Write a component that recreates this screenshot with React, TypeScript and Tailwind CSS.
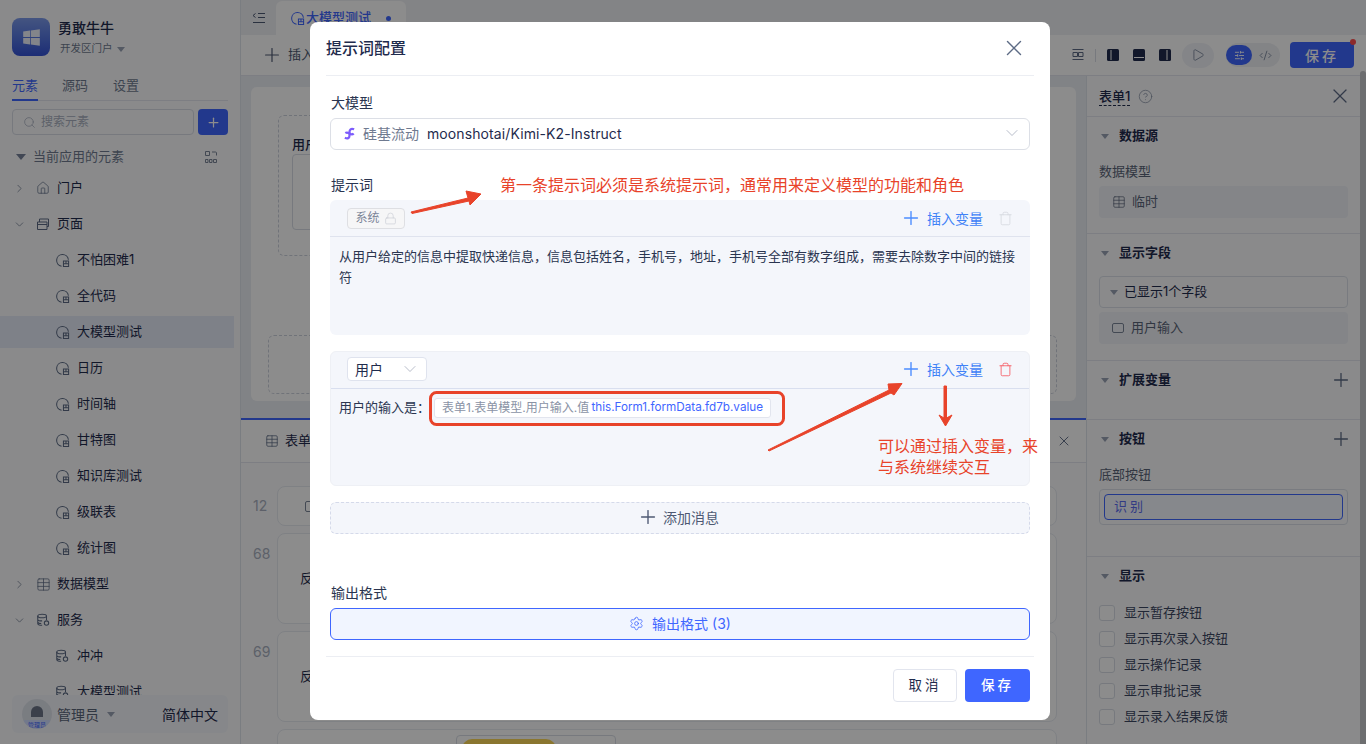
import { ChevronDown, ChevronRight, CircleHelp, CodeXml, Home, Lock, Play, Plus, Search, Settings, SlidersHorizontal, Table, Trash, X } from "lucide-react";
import { FaWindows } from "react-icons/fa";

const fontStack = { fontFamily: 'Inter, "Noto Sans CJK SC", sans-serif' };

function PageIcon({ className = "text-[#5d6b85]" }: { className?: string }) {
  return (
    <svg viewBox="0 0 16 16" fill="none" stroke="currentColor" strokeWidth="1.1" className={`h-[15px] w-[15px] shrink-0 ${className}`}>
      <path d="M7 14.2A6.3 6.3 0 1 1 14.3 7.2" />
      <path d="M9 8.5h5.5v6H9zM9 11.5h5.5M11.7 8.5v3" />
    </svg>
  );
}

function ServiceIcon() {
  return (
    <svg viewBox="0 0 16 16" fill="none" stroke="currentColor" strokeWidth="1.2" className="h-[14px] w-[14px] shrink-0 text-[#5d6b85]">
      <ellipse cx="7" cy="3.5" rx="5" ry="2" />
      <path d="M2 3.5v8.5c0 1 2 2 5 2M12 3.500V8M2 7c0 1 2 2 5 2M2 10c0 1 2 2 4 2" />
      <circle cx="12" cy="11.5" r="2.5" />
    </svg>
  );
}

function Caret({ className = "" }: { className?: string }) {
  return <span className={`inline-block h-0 w-0 border-x-[4px] border-t-[5px] border-x-transparent border-t-[#9aa3b5] ${className}`} />;
}

function TreeRow({ label, level = 1, open, active, icon }: { label: string; level?: number; open?: boolean; active?: boolean; icon: React.ReactNode }) {
  return (
    <div className={`flex w-[234px] items-center text-[13px] text-[#1f2b4d] ${active ? "my-[2px] h-[32px] bg-[#e6ebf7]" : "h-[36px]"}`}>
      {level === 1 ? (
        <>
          <span className="flex w-[38px] pl-[13px] text-[#7b8598]">
            {open ? <ChevronDown size={13} strokeWidth={1.5} /> : <ChevronRight size={13} strokeWidth={1.5} />}
          </span>
          <span className="-ml-[2px] flex w-[21px] items-center">{icon}</span>
        </>
      ) : (
        <span className="ml-[55px] flex w-[22px] items-center">{icon}</span>
      )}
      <span>{label}</span>
    </div>
  );
}

function Sidebar() {
  const pages = ["不怕困难1", "全代码", "大模型测试", "日历", "时间轴", "甘特图", "知识库测试", "级联表", "统计图"];
  return (
    <aside className="relative h-full w-[241px] shrink-0 overflow-hidden border-r border-[#dfe3ec] bg-[#fbfcfe] pt-[18px]">
      <div className="flex items-center px-[12px]">
        <div className="flex h-[38px] w-[38px] items-center justify-center rounded-[8px] bg-gradient-to-b from-[#7d9aeb] to-[#3552d6]">
          <FaWindows size={19} className="text-white/90" />
        </div>
        <div className="ml-[8px]">
          <div className="text-[14px] font-medium leading-[20px] text-[#1f2b4d]">勇敢牛牛</div>
          <div className="ml-[2px] mt-[4px] flex items-center gap-[4px] text-[10.5px] leading-[14px] text-[#6f7a90]">
            开发区门户 <Caret />
          </div>
        </div>
      </div>
      <div className="mx-[12px] mt-[20px] flex h-[25px] gap-[24px] border-b border-[#e3e6ee] text-[13px]">
        <span className="h-[25px] border-b-2 border-[#3f66ff] text-[#3f66ff]">元素</span>
        <span className="text-[#6f7a90]">源码</span>
        <span className="ml-[1px] text-[#6f7a90]">设置</span>
      </div>
      <div className="mx-[12px] mt-[8px] flex gap-[4px]">
        <div className="flex h-[26px] w-[182px] items-center gap-[5px] rounded-[4px] border border-[#d9dde6] pl-[10px] text-[12px] text-[#a9b0bf]">
          <Search size={13} strokeWidth={1.4} /> 搜索元素
        </div>
        <div className="flex h-[26px] w-[30px] items-center justify-center rounded-[4px] bg-[#3f66ff] text-white">
          <Plus size={15} />
        </div>
      </div>
      <div className="mt-[9px] flex h-[26px] w-[234px] items-center pl-[16px] pr-[16px] text-[13px] text-[#6f7a90]">
        <Caret className="mr-[7px] !border-x-[5px] !border-t-[6px] !border-t-[#77829a]" />
        当前应用的元素
        <svg viewBox="0 0 14 14" fill="none" stroke="#7b8598" className="ml-auto h-[14px] w-[14px]">
          <path d="M1.500 1.500h4v4h-4zM8 2h3.500a1 1 0 0 1 1 1v2.500M1.500 9.500h2.500v3h-2.500zM5.500 9.500h2.500v3h-2.500zM9.500 9.500h3v3h-3z" />
        </svg>
      </div>
      <TreeRow label="门户" icon={<Home size={14} strokeWidth={1.2} className="text-[#5d6b85]" />} />
      <TreeRow label="页面" open icon={<svg viewBox="0 0 14 14" fill="none" stroke="#5d6b85" className="h-[14px] w-[14px]"><path d="M1.500 5h9.500v7.500h-9.500zM1.500 7.500h9.500M3.500 5V2h9v7.500h-1.500" /></svg>} />
      {pages.map((p) => (
        <TreeRow key={p} label={p} level={2} active={p === "大模型测试"} icon={<PageIcon />} />
      ))}
      <TreeRow label="数据模型" icon={<Table size={15} strokeWidth={1.2} className="text-[#5d6b85]" />} />
      <TreeRow label="服务" open icon={<ServiceIcon />} />
      <TreeRow label="冲冲" level={2} icon={<ServiceIcon />} />
      <TreeRow label="大模型测试" level={2} icon={<ServiceIcon />} />
      <div className="absolute bottom-[11px] left-[12px] flex h-[38px] w-[216px] items-center rounded-[6px] bg-[#f4f6fb] pl-[10px] pr-[10px]">
        <div className="relative flex h-[30px] w-[30px] items-start justify-center overflow-hidden rounded-full bg-[#dfe3ec] pt-[7px]">
          <div className="h-[11px] w-[12px] rounded-t-full bg-[#6c7688]" />
          <span className="absolute bottom-0 left-0 w-full rounded-[4px] bg-[#cfdcff] text-center text-[6px] leading-[9px] text-[#3f66ff]">管理员</span>
        </div>
        <span className="ml-[5px] text-[14px] text-[#5a6478]">管理员</span>
        <Caret className="ml-[8px]" />
        <span className="ml-auto text-[14px] text-[#1f2b4d]">简体中文</span>
      </div>
    </aside>
  );
}

function CenterArea() {
  return (
    <div className="flex h-full w-[845px] shrink-0 flex-col">
      <div className="h-[342px] bg-[#eceff5] px-[10px] pt-[11px]">
        <div className="relative h-[314px] rounded-[6px] bg-white pl-[27px] pt-[28px]">
          <div className="h-[141px] w-[400px] rounded-[6px] border border-dashed border-[#cdd2dd] pl-[13px] pt-[18px]">
            <div className="text-[13px] font-medium leading-[20px] text-[#1f2b4d]">用户</div>
            <div className="h-[76px] w-[300px] rounded-[4px] border border-[#d9dde6]" />
          </div>
          <div className="absolute left-[17px] top-[248px] h-[59px] w-[789px] rounded-[6px] border border-dashed border-[#cdd2dd]" />
        </div>
      </div>
      <div className="flex h-[45px] items-center border-t-2 border-b border-t-[#3f66ff] border-b-[#e3e6ee] bg-white pl-[24px] pr-[14px] text-[13px] text-[#1f2b4d]">
        <Table size={14} strokeWidth={1.3} className="mr-[6px] text-[#5d6b85]" /> 表单
        <X size={16} strokeWidth={1.4} className="ml-auto text-[#5d6b85]" />
      </div>
      <div className="flex flex-1 flex-col gap-[7px] overflow-hidden bg-[#fbfcfe] pl-[12px] pt-[23px]">
        <div className="flex">
          <span className="w-[24px] pt-[9px] text-[14px] text-[#a9b0bf]">12</span>
          <div className="flex h-[40px] w-[780px] items-center rounded-[8px] border border-[#e8ebf1] bg-white pl-[27px]">
            <span className="h-[11px] w-[11px] rounded-[2px] border border-[#7b8598]" />
          </div>
        </div>
        {["68", "69"].map((no) => (
          <div key={no} className="flex">
            <span className="w-[24px] pt-[10px] text-[14px] text-[#a9b0bf]">{no}</span>
            <div className="flex h-[91px] w-[780px] items-center rounded-[8px] border border-[#e8ebf1] bg-white pl-[22px] text-[13px] text-[#1f2b4d]">反</div>
          </div>
        ))}
        <div className="ml-[24px] h-[60px] w-[780px] rounded-[8px] border border-[#e8ebf1] bg-white pl-[178px] pt-[5px]">
          <div className="h-[40px] w-[160px] rounded-[4px] border border-[#d9dde6] pl-[5px] pt-[3px]">
            <div className="h-[20px] w-[94px] rounded-t-[10px] bg-[#fcd757]" />
          </div>
        </div>
      </div>
    </div>
  );
}

function PanelSection({ title, plus, className, children }: { title: string; plus?: boolean; className: string; children?: React.ReactNode }) {
  return (
    <section className={`border-b border-[#e3e6ee] px-[12px] pt-[9px] ${className}`}>
      <div className="flex h-[20px] items-center text-[13px] font-semibold text-[#1f2b4d]">
        <Caret className="ml-[2px] mr-[10px]" />
        {title}
        {plus && <Plus size={22} strokeWidth={1.4} className="-mr-[4px] ml-auto text-[#5d6b85]" />}
      </div>
      {children}
    </section>
  );
}

function RightPanel() {
  const checks = ["显示暂存按钮", "显示再次录入按钮", "显示操作记录", "显示审批记录", "显示录入结果反馈"];
  return (
    <aside className="h-full w-[274px] shrink-0 border-l border-[#dfe3ec] bg-[#fbfcfe] text-[#1f2b4d]">
      <div className="flex h-[41px] items-center border-b border-[#e3e6ee] px-[12px]">
        <span className="border-b border-dashed border-[#1f2b4d] text-[13px] font-medium leading-[18px]">表单1</span>
        <CircleHelp size={15} strokeWidth={1.2} className="ml-[8px] text-[#8a93a5]" />
        <X size={24} strokeWidth={1.2} className="-mr-[4px] ml-auto text-[#5d6b85]" />
      </div>
      <PanelSection title="数据源" className="h-[117px]">
        <div className="mt-[15px] text-[13px] leading-[20px] text-[#5a6478]">数据模型</div>
        <div className="mt-[5px] flex h-[32px] items-center rounded-[4px] bg-[#f1f3f8] pl-[13px] text-[13px] text-[#5a6478]">
          <Table size={14} strokeWidth={1.2} className="mr-[6px]" /> 临时
        </div>
      </PanelSection>
      <PanelSection title="显示字段" className="h-[127px]">
        <div className="mt-[13px] flex h-[32px] items-center rounded-[4px] border border-[#dde1ea] pl-[10px] text-[13px]">
          <Caret className="mr-[6px]" /> 已显示1个字段
        </div>
        <div className="mt-[4px] flex h-[32px] items-center rounded-[4px] bg-[#f1f3f8] pl-[13px] text-[13px] text-[#5a6478]">
          <span className="mr-[7px] h-[10px] w-[12px] rounded-[2px] border border-[#7b8598]" /> 用户输入
        </div>
      </PanelSection>
      <PanelSection title="扩展变量" plus className="h-[59px]" />
      <PanelSection title="按钮" plus className="h-[137px]">
        <div className="mt-[15px] text-[13px] leading-[20px] text-[#5a6478]">底部按钮</div>
        <div className="mt-[5px] rounded-[4px] border border-[#dde1ea] px-[4px] pb-[4px] pt-[4px]">
          <div className="flex h-[26px] items-center rounded-[4px] border border-[#3f66ff] bg-[#f4f7ff] pl-[9px] text-[13px] tracking-[3px] text-[#5b6cf0]">识别</div>
        </div>
      </PanelSection>
      <PanelSection title="显示" className="border-b-0">
        <div className="mt-[14px] flex flex-col">
          {checks.map((c) => (
            <label key={c} className="flex h-[26px] items-center text-[13px] text-[#3d4763]">
              <span className="mr-[9px] h-[16px] w-[16px] rounded-[3px] border border-[#d9dde6] bg-white" />
              {c}
            </label>
          ))}
        </div>
      </PanelSection>
    </aside>
  );
}

function LayoutIcon({ line }: { line: string }) {
  return (
    <svg viewBox="0 0 12 12" className="h-[12px] w-[12px]">
      <rect width="12" height="12" rx="1.500" fill="#1f2b4d" />
      <path d={line} stroke="#fff" fill="none" />
    </svg>
  );
}

function TopBars() {
  return (
    <>
      <div className="flex h-[35px] shrink-0 bg-[#eef0f5]">
        <div className="flex w-[35px] items-center justify-center text-[#4e5a73]">
          <svg viewBox="0 0 14 12" fill="none" stroke="currentColor" className="h-[12px] w-[14px]"><path d="M3.500 1.500 1 3.500l2.500 2M6 1.500h7M6 5.500h7M1 10.500h12" /></svg>
        </div>
        <div className="mt-[1px] flex h-[34px] w-[130px] items-center gap-[1px] rounded-t-[6px] bg-white pl-[14px] text-[13px] font-medium text-[#3f66ff]">
          <PageIcon className="text-[#3f66ff]" /> 大模型测试
          <span className="ml-[14px] h-[5px] w-[5px] rounded-full bg-[#3f66ff]" />
        </div>
      </div>
      <div className="flex h-[41px] shrink-0 items-center border-b border-[#e3e6ee] bg-white pl-[20px] pr-[12px] text-[13px] text-[#4e5a73]">
        <Plus size={22} strokeWidth={1.3} className="mr-[5px]" /> 插入
        <div className="ml-auto flex items-center">
          <svg viewBox="0 0 12 12" fill="none" stroke="#5d6b85" className="h-[12px] w-[12px]"><path d="M.5.5h11M1 3.500h4.500v4H1zM6.500 3.500H11v4H6.500zM.5 10.500h11" /></svg>
          <span className="ml-[11px] h-[13px] w-px bg-[#d9dde6]" />
          <div className="ml-[11px] flex gap-[14px]">
            <LayoutIcon line="M4 1v10" />
            <LayoutIcon line="M1 8.500h10" />
            <LayoutIcon line="M8 1v10" />
          </div>
          <span className="ml-[11px] flex h-[25px] w-[32px] items-center justify-center rounded-full bg-[#f1f3f8]">
            <Play size={14} strokeWidth={1.2} className="text-[#5d6b85]" />
          </span>
          <div className="ml-[12px] flex h-[24px] w-[54px] items-center rounded-full bg-[#eef0f5]">
            <span className="flex h-[20px] w-[26px] items-center justify-center rounded-full bg-[#3f66ff] text-white"><SlidersHorizontal size={11} /></span>
            <CodeXml size={13} strokeWidth={1.3} className="ml-[7px] text-[#5d6b85]" />
          </div>
          <div className="relative ml-[10px] flex h-[26px] w-[64px] items-center justify-center rounded-[4px] bg-[#3f66ff] text-[14px] font-medium tracking-[3px] text-white">
            保存
            <span className="absolute -right-[2px] -top-[3px] h-[6px] w-[6px] rounded-full bg-[#ff4d4f]" />
          </div>
        </div>
      </div>
    </>
  );
}

function FormLabel({ children, className = "" }: { children: React.ReactNode; className?: string }) {
  return <div className={`pl-[1px] text-[14px] leading-[20px] text-[#2a3550] ${className}`}>{children}</div>;
}

function InsertVar({ danger }: { danger?: boolean }) {
  return (
    <div className="ml-auto flex items-center">
      <Plus size={22} strokeWidth={1.5} className="text-[#4b8dff]" />
      <span className="ml-[5px] text-[14px] text-[#3f82f7]">插入变量</span>
      <Trash size={15} strokeWidth={1.3} className={`ml-[15px] ${danger ? "text-[#f5545c]" : "text-[#d5d8df]"}`} />
    </div>
  );
}

function PromptDialog() {
  return (
    <div className="absolute left-[310px] top-[22px] flex h-[698px] w-[740px] flex-col rounded-[8px] bg-white px-[16px]">
      <div className="flex h-[54px] shrink-0 items-center border-b border-[#eceef3] pb-[2px]">
        <span className="text-[16px] font-medium text-[#1f2b4d]">提示词配置</span>
        <X size={26} strokeWidth={1.3} className="ml-auto mr-[7px] text-[#5d6b85]" />
      </div>
      <div className="flex-1 px-[4px] pt-[17px]">
        <FormLabel>大模型</FormLabel>
        <div className="mt-[5px] flex h-[32px] items-center rounded-[6px] border border-[#dcdfe6] pb-[2px] pl-[12px] pr-[7px] text-[14px]">
          <svg viewBox="0 0 14 14" fill="none" stroke="#7c5cfc" strokeWidth="2.4" className="mr-[7px] h-[13px] w-[13px]">
            <path d="M12 2.500C8.500 1 7 3 7 5.500v4C7 12 5 13 2 11.500" />
            <path d="M2.500 6.500c1.500-1 3-.5 4.500.5s3.500 1.200 4.500 0" />
          </svg>
          <span className="text-[#6f7a90]">硅基流动</span>
          <span className="ml-[8px] tracking-[0.1px] text-[#1f2b4d]">moonshotai/Kimi-K2-Instruct</span>
          <ChevronDown size={20} strokeWidth={1} className="ml-auto text-[#a9b0bf]" />
        </div>
        <FormLabel className="mt-[25px]">提示词</FormLabel>
        <div className="mt-[5px] h-[135px] rounded-[6px] bg-[#f4f6fb]">
          <div className="flex h-[37px] items-center border-b border-[#dfe3ee] pl-[17px] pr-[17px]">
            <span className="flex h-[21px] w-[58px] items-center justify-center gap-[4px] rounded-[4px] border border-[#dedfe3] bg-[#f6f6f7] text-[12px] text-[#7b8598]">
              系统 <Lock size={13} strokeWidth={1.2} className="text-[#c9ccd3]" />
            </span>
            <InsertVar />
          </div>
          <p className="px-[9px] pt-[9px] text-[13px] leading-[21px] text-[#2a3550]">从用户给定的信息中提取快递信息，信息包括姓名，手机号，地址，手机号全部有数字组成，需要去除数字中间的链接符</p>
        </div>
        <div className="mt-[16px] h-[135px] rounded-[6px] border border-[#eef0f5] bg-[#f4f6fb]">
          <div className="flex h-[37px] items-center border-b border-[#d9dfef] pb-[2px] pl-[16px] pr-[16px]">
            <span className="flex h-[24px] w-[80px] items-center justify-between rounded-[4px] border border-[#dfe3ee] bg-white pl-[7px] pr-[6px] text-[14px] text-[#1f2b4d]">
              用户 <ChevronDown size={20} strokeWidth={1} className="text-[#a9b0bf]" />
            </span>
            <InsertVar danger />
          </div>
          <div className="flex items-center pl-[8px] pt-[9px]">
            <span className="whitespace-nowrap text-[13px] text-[#2a3550]">用户的输入是：</span>
            <span className="ml-[4px] flex h-[20px] w-[337px] items-center justify-between whitespace-nowrap rounded-[3px] border border-[#e2e5ee] bg-white px-[7px] text-[12px]">
              <span className="text-[#8a93a5]">表单1.表单模型.用户输入.值</span>
              <span className="text-[11.7px] text-[#3f66ff]">this.Form1.formData.fd7b.value</span>
            </span>
          </div>
        </div>
        <div className="mt-[16px] flex h-[32px] items-center justify-center rounded-[6px] border border-dashed border-[#d5daea] bg-[#f4f6fb] pb-[2px] pr-[4px] text-[14px] text-[#4e5a73]">
          <Plus size={22} strokeWidth={1.5} className="mr-[4px]" /> 添加消息
        </div>
        <FormLabel className="mt-[49px]">输出格式</FormLabel>
        <div className="mt-[5px] flex h-[32px] items-center justify-center rounded-[6px] border border-[#3f66ff] bg-[#f1f5ff] pb-[2px] text-[14px] text-[#3f66ff]">
          <Settings size={15} strokeWidth={1.3} className="mr-[8px]" /> 输出格式 (3)
        </div>
      </div>
      <div className="flex h-[64px] shrink-0 items-start justify-end gap-[8px] border-t border-[#eceef3] px-[4px] pt-[12px]">
        <button className="h-[33px] w-[64px] rounded-[4px] border border-[#e2e5ee] bg-white text-[13.5px] tracking-[3px] text-[#1f2b4d]">取消</button>
        <button className="h-[33px] w-[65px] rounded-[4px] bg-[#3f66ff] text-[13.5px] font-medium tracking-[3px] text-white">保存</button>
      </div>
    </div>
  );
}

function Annotations() {
  const red = "#e8432a";
  return (
    <>
      <svg viewBox="0 0 1366 744" fill="none" className="pointer-events-none absolute inset-0 h-[744px] w-[1366px]">
        <rect x="430.500" y="392.500" width="353" height="32" rx="6" stroke={red} strokeWidth="3" />
        <path d="M411 212 468 198 466 191 481 194 470 205 469 201 412 213.500Z" fill={red} stroke={red} />
        <path d="M768 450 889 390 888 384 902 383.500 894 395 891 393 769 451Z" fill={red} stroke={red} />
        <path d="M944 386h2.500v32l5.500-3-6.500 11-6.500-11 5 3Z" fill={red} stroke={red} />
      </svg>
      <div className="absolute left-[500px] top-[174px] text-[16px] leading-[22px] text-[#e8432a]">第一条提示词必须是系统提示词，通常用来定义模型的功能和角色</div>
      <div className="absolute left-[878px] top-[436px] w-[165px] text-[16px] leading-[21px] text-[#e8432a]">可以通过插入变量，来与系统继续交互</div>
    </>
  );
}

export default function App() {
  return (
    <div style={fontStack} className="relative flex h-[744px] w-[1366px] overflow-hidden bg-white">
      <Sidebar />
      <main className="flex h-full min-w-0 flex-1 flex-col">
        <TopBars />
        <div className="flex min-h-0 flex-1">
          <CenterArea />
          <RightPanel />
          <div className="-mt-[5px] w-[6px] shrink-0 rounded-t-[3px] bg-[#c6c8cc]" />
        </div>
      </main>
      <div className="absolute inset-0 bg-black/45" />
      <PromptDialog />
      <Annotations />
    </div>
  );
}
